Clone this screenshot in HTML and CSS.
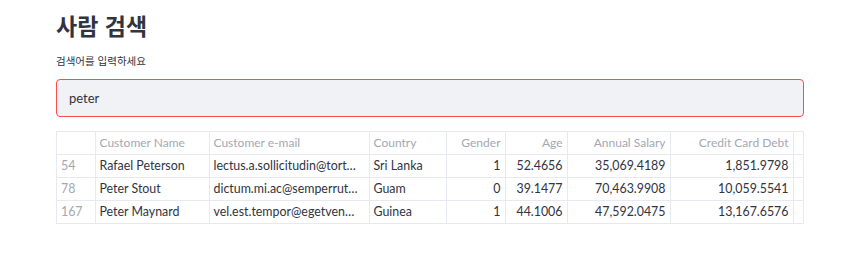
FILE: index.html
```html
<!DOCTYPE html>
<html lang="ko">
<head>
    <meta charset="UTF-8">
    <meta name="viewport" content="width=device-width, initial-scale=1.0">
    <title>사람 검색</title>
    <link rel="stylesheet" href="styles.css">
</head>
<body>
    <main class="block">
        <h1>사람 검색</h1>
        <label for="query" class="field-label">검색어를 입력하세요</label>
        <input type="text" id="query" class="search" value="peter">
        <div class="frame">
            <table class="grid">
                <colgroup>
                    <col class="w-idx">
                    <col class="w-name">
                    <col class="w-mail">
                    <col class="w-country">
                    <col class="w-gender">
                    <col class="w-age">
                    <col class="w-salary">
                    <col class="w-debt">
                    <col class="w-pad">
                </colgroup>
                <thead>
                    <tr>
                        <th class="idx"></th>
                        <th>Customer Name</th>
                        <th>Customer e-mail</th>
                        <th>Country</th>
                        <th class="num">Gender</th>
                        <th class="num">Age</th>
                        <th class="num">Annual Salary</th>
                        <th class="num">Credit Card Debt</th>
                        <th class="pad"></th>
                    </tr>
                </thead>
                <tbody>
                    <tr>
                        <td class="idx">54</td>
                        <td>Rafael Peterson</td>
                        <td class="cut">lectus.a.sollicitudin@tortor.com</td>
                        <td>Sri Lanka</td>
                        <td class="num">1</td>
                        <td class="num">52.4656</td>
                        <td class="num">35,069.4189</td>
                        <td class="num">1,851.9798</td>
                        <td class="pad"></td>
                    </tr>
                    <tr>
                        <td class="idx">78</td>
                        <td>Peter Stout</td>
                        <td class="cut">dictum.mi.ac@semperrutrum.ca</td>
                        <td>Guam</td>
                        <td class="num">0</td>
                        <td class="num">39.1477</td>
                        <td class="num">70,463.9908</td>
                        <td class="num">10,059.5541</td>
                        <td class="pad"></td>
                    </tr>
                    <tr>
                        <td class="idx">167</td>
                        <td>Peter Maynard</td>
                        <td class="cut">vel.est.tempor@egetvenenatis.org</td>
                        <td>Guinea</td>
                        <td class="num">1</td>
                        <td class="num">44.1006</td>
                        <td class="num">47,592.0475</td>
                        <td class="num">13,167.6576</td>
                        <td class="pad"></td>
                    </tr>
                </tbody>
            </table>
        </div>
    </main>
</body>
</html>
```

FILE: styles.css
```css
body {
    margin: 0;
    padding: 0;
    background-color: #ffffff;
    font-family: Lato, "Noto Sans CJK KR", sans-serif;
    color: #31333f;
}
.block {
    width: 748px;
    margin: 0 0 0 56px;
    padding-top: 8px;
}
h1 {
    margin: 0;
    font-family: "Noto Sans CJK KR", sans-serif;
    font-size: 23px;
    font-weight: 700;
    line-height: 34px;
    color: #31333f;
}
.field-label {
    display: block;
    margin-top: 11px;
    font-family: "Noto Sans CJK KR", sans-serif;
    font-size: 10.5px;
    line-height: 16px;
    color: #31333f;
}
.search {
    display: block;
    width: 100%;
    height: 38px;
    margin-top: 10px;
    padding: 0 12px;
    box-sizing: border-box;
    border: 1px solid #ff4b4b;
    border-radius: 4px;
    background-color: #f0f2f6;
    font-family: Lato, sans-serif;
    font-size: 13px;
    color: #31333f;
    outline: none;
}
.frame {
    margin-top: 14px;
    border: 1px solid #e6e9ef;
    width: 100%;
    box-sizing: border-box;
}
.grid {
    width: 746px;
    border-collapse: collapse;
    table-layout: fixed;
    font-size: 12.4px;
}
.w-idx { width: 38px; }
.w-name { width: 114px; }
.w-mail { width: 160px; }
.w-country { width: 77px; }
.w-gender { width: 59px; }
.w-age { width: 62px; }
.w-salary { width: 103px; }
.w-debt { width: 123px; }
.w-pad { width: 10px; }
.grid th, .grid td {
    height: 23px;
    box-sizing: border-box;
    padding: 0 4px;
    border-right: 1px solid #e6e9ef;
    border-bottom: 1px solid #e6e9ef;
    white-space: nowrap;
    overflow: hidden;
    text-align: left;
    font-weight: 400;
}
.grid tbody tr:last-child td {
    border-bottom: none;
}
.grid th {
    height: 22px;
    color: #a3a8b4;
    font-size: 12px;
}
.grid .idx {
    color: #a3a8b4;
}
.grid .num {
    text-align: right;
}
.grid .cut {
    padding-right: 8px;
    text-overflow: ellipsis;
}
.grid .pad {
    padding: 0;
    border-right: none;
}
```
